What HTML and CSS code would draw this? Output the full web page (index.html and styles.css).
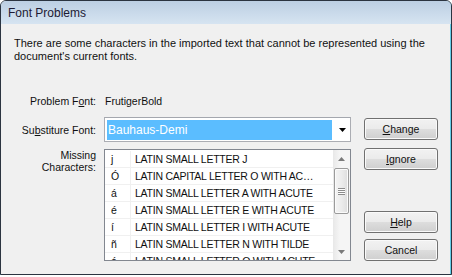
FILE: index.html
```html
<!DOCTYPE html>
<html lang="en">
<head>
  <meta charset="UTF-8" />
  <title>Font Problems</title>
  <link rel="stylesheet" href="styles.css">
</head>
<body>
  <div class="window">
    <div class="titlebar">Font Problems</div>
    <div class="dialog">
      <p class="intro">There are some characters in the imported text that cannot be represented using the document's current fonts.</p>

      <div class="main">
        <div class="form">
          <div class="label label-first">Problem F<u>o</u>nt:</div>
          <div class="value">FrutigerBold</div>

          <div class="label label-mid">Su<u>b</u>stiture Font:</div>
          <div class="combo">
            <span class="combo-text">Bauhaus-Demi</span>
            <span class="combo-arrow">
              <svg width="7" height="4" viewBox="0 0 7 4"><path d="M0 0h7L3.5 4z" fill="#000"/></svg>
            </span>
          </div>

          <div class="label label-first label-two">Missing<br>Characters:</div>
          <div class="list">
            <div class="rows">
              <div class="row"><span class="ch">j</span><span class="name">LATIN SMALL LETTER J</span></div>
              <div class="row"><span class="ch">Ó</span><span class="name">LATIN CAPITAL LETTER O WITH ACUTE</span></div>
              <div class="row"><span class="ch">á</span><span class="name">LATIN SMALL LETTER A WITH ACUTE</span></div>
              <div class="row"><span class="ch">é</span><span class="name">LATIN SMALL LETTER E WITH ACUTE</span></div>
              <div class="row"><span class="ch">í</span><span class="name">LATIN SMALL LETTER I WITH ACUTE</span></div>
              <div class="row"><span class="ch">ñ</span><span class="name">LATIN SMALL LETTER N WITH TILDE</span></div>
              <div class="row"><span class="ch">ó</span><span class="name">LATIN SMALL LETTER O WITH ACUTE</span></div>
            </div>
            <div class="scrollbar">
              <div class="sb-btn">
                <svg width="7" height="4" viewBox="0 0 7 4"><path d="M3.5 0L7 4H0z" fill="#7a7a7a"/></svg>
              </div>
              <div class="sb-thumb"><span class="grip"></span></div>
              <div class="sb-btn sb-down">
                <svg width="7" height="4" viewBox="0 0 7 4"><path d="M0 0h7L3.5 4z" fill="#7a7a7a"/></svg>
              </div>
            </div>
          </div>
        </div>

        <div class="buttons">
          <button class="btn"><u>C</u>hange</button>
          <button class="btn btn-gap"><u>I</u>gnore</button>
          <button class="btn btn-push"><u>H</u>elp</button>
          <button class="btn btn-last">Cancel</button>
        </div>
      </div>
    </div>
  </div>
</body>
</html>
```

FILE: styles.css
```css
* { box-sizing: border-box; }
html, body { margin: 0; padding: 0; background: #fff; }
body { font-family: "Liberation Sans", Arial, sans-serif; font-size: 10.5px; color: #101010; }

.window {
  width: 452px;
  height: 275px;
  border: 1px solid #2b3440;
  border-radius: 6px 6px 0 0;
  background: #f0f0f0;
  box-shadow: inset -1px 0 0 #66cfe9, 0 1px 0 #66cfe9;
  overflow: hidden;
}
.titlebar {
  height: 23px;
  padding-left: 7px;
  line-height: 24px;
  font-size: 12px;
  color: #1c1a34;
  background: linear-gradient(#bccfe3, #d6e4f1);
}

.dialog { padding: 13px 8px 0 12px; }
.intro { margin: 0; line-height: 13px; padding-left: 1px; font-size: 11px; }

.main { display: flex; margin-top: 32px; }
.form {
  display: grid;
  grid-template-columns: 83px 247px;
  grid-template-rows: 15px 25px 112px;
  column-gap: 8px;
  row-gap: 7px;
}
.label { text-align: right; line-height: 13px; }
.label-first { align-self: start; }
.label-mid { align-self: center; padding-top: 1px; }
.label-two { line-height: 12px; }
.value { line-height: 13px; padding-left: 1px; }

.combo {
  display: flex;
  height: 25px;
  padding: 2px 1px 1px 2px;
  border: 1px solid #abadb3;
  border-top-color: #a4a7ae;
  background: #fff;
}
.combo-text {
  flex: 1;
  padding-left: 1px;
  background: #5bbdff;
  color: #fff;
  font-size: 12px;
  line-height: 20px;
}
.combo-arrow {
  width: 17px;
  padding-left: 4px;
  display: flex;
  align-items: center;
  justify-content: center;
}
.combo-arrow svg { display: block; }

.list {
  display: flex;
  border: 1px solid #828790;
  background: #fff;
  overflow: hidden;
}
.rows { flex: 1; min-width: 0; padding-top: 1px; }
.row {
  display: flex;
  height: 17px;
  line-height: 16px;
  border-bottom: 1px solid #f0f0f0;
}
.ch {
  width: 26px;
  flex: none;
  padding-left: 6px;
  border-right: 1px solid #f0f0f0;
}
.name {
  flex: 1;
  min-width: 0;
  padding-left: 4px;
  padding-right: 13px;
  letter-spacing: -0.25px;
  white-space: nowrap;
  overflow: hidden;
  text-overflow: ellipsis;
}

.scrollbar {
  width: 17px;
  flex: none;
  display: flex;
  flex-direction: column;
  background: linear-gradient(90deg, #e8e8e8, #f5f5f5 40%, #f5f5f5);
}
.sb-btn {
  height: 17px;
  display: flex;
  align-items: center;
  justify-content: center;
}
.sb-btn svg { display: block; }
.sb-down { margin-top: auto; }
.sb-thumb {
  height: 46px;
  margin: 1px 1px 0 1px;
  border: 1px solid #9b9b9b;
  border-radius: 2px;
  background: linear-gradient(90deg, #f4f4f4, #ececec 50%, #dedede);
  box-shadow: inset 0 0 0 1px #fbfbfb;
  display: flex;
  align-items: center;
  justify-content: center;
}
.grip {
  width: 7px;
  height: 7px;
  background: repeating-linear-gradient(#8c8c8c 0 1px, #fdfdfd 1px 2px);
}

.buttons {
  display: flex;
  flex-direction: column;
  width: 74px;
  margin-left: 13px;
  padding-top: 23px;
}
.btn {
  height: 22px;
  padding: 0;
  border: 1px solid #707070;
  border-radius: 3px;
  background: linear-gradient(#f2f2f2 0%, #ebebeb 48%, #dddddd 52%, #cfcfcf 100%);
  box-shadow: inset 0 0 0 1px #fafafa;
  font-family: "Liberation Sans", Arial, sans-serif;
  font-size: 10.5px;
  color: #101010;
}
.btn-gap { margin-top: 8px; }
.btn-push { margin-top: auto; }
.btn-last { margin-top: 6px; }
```
